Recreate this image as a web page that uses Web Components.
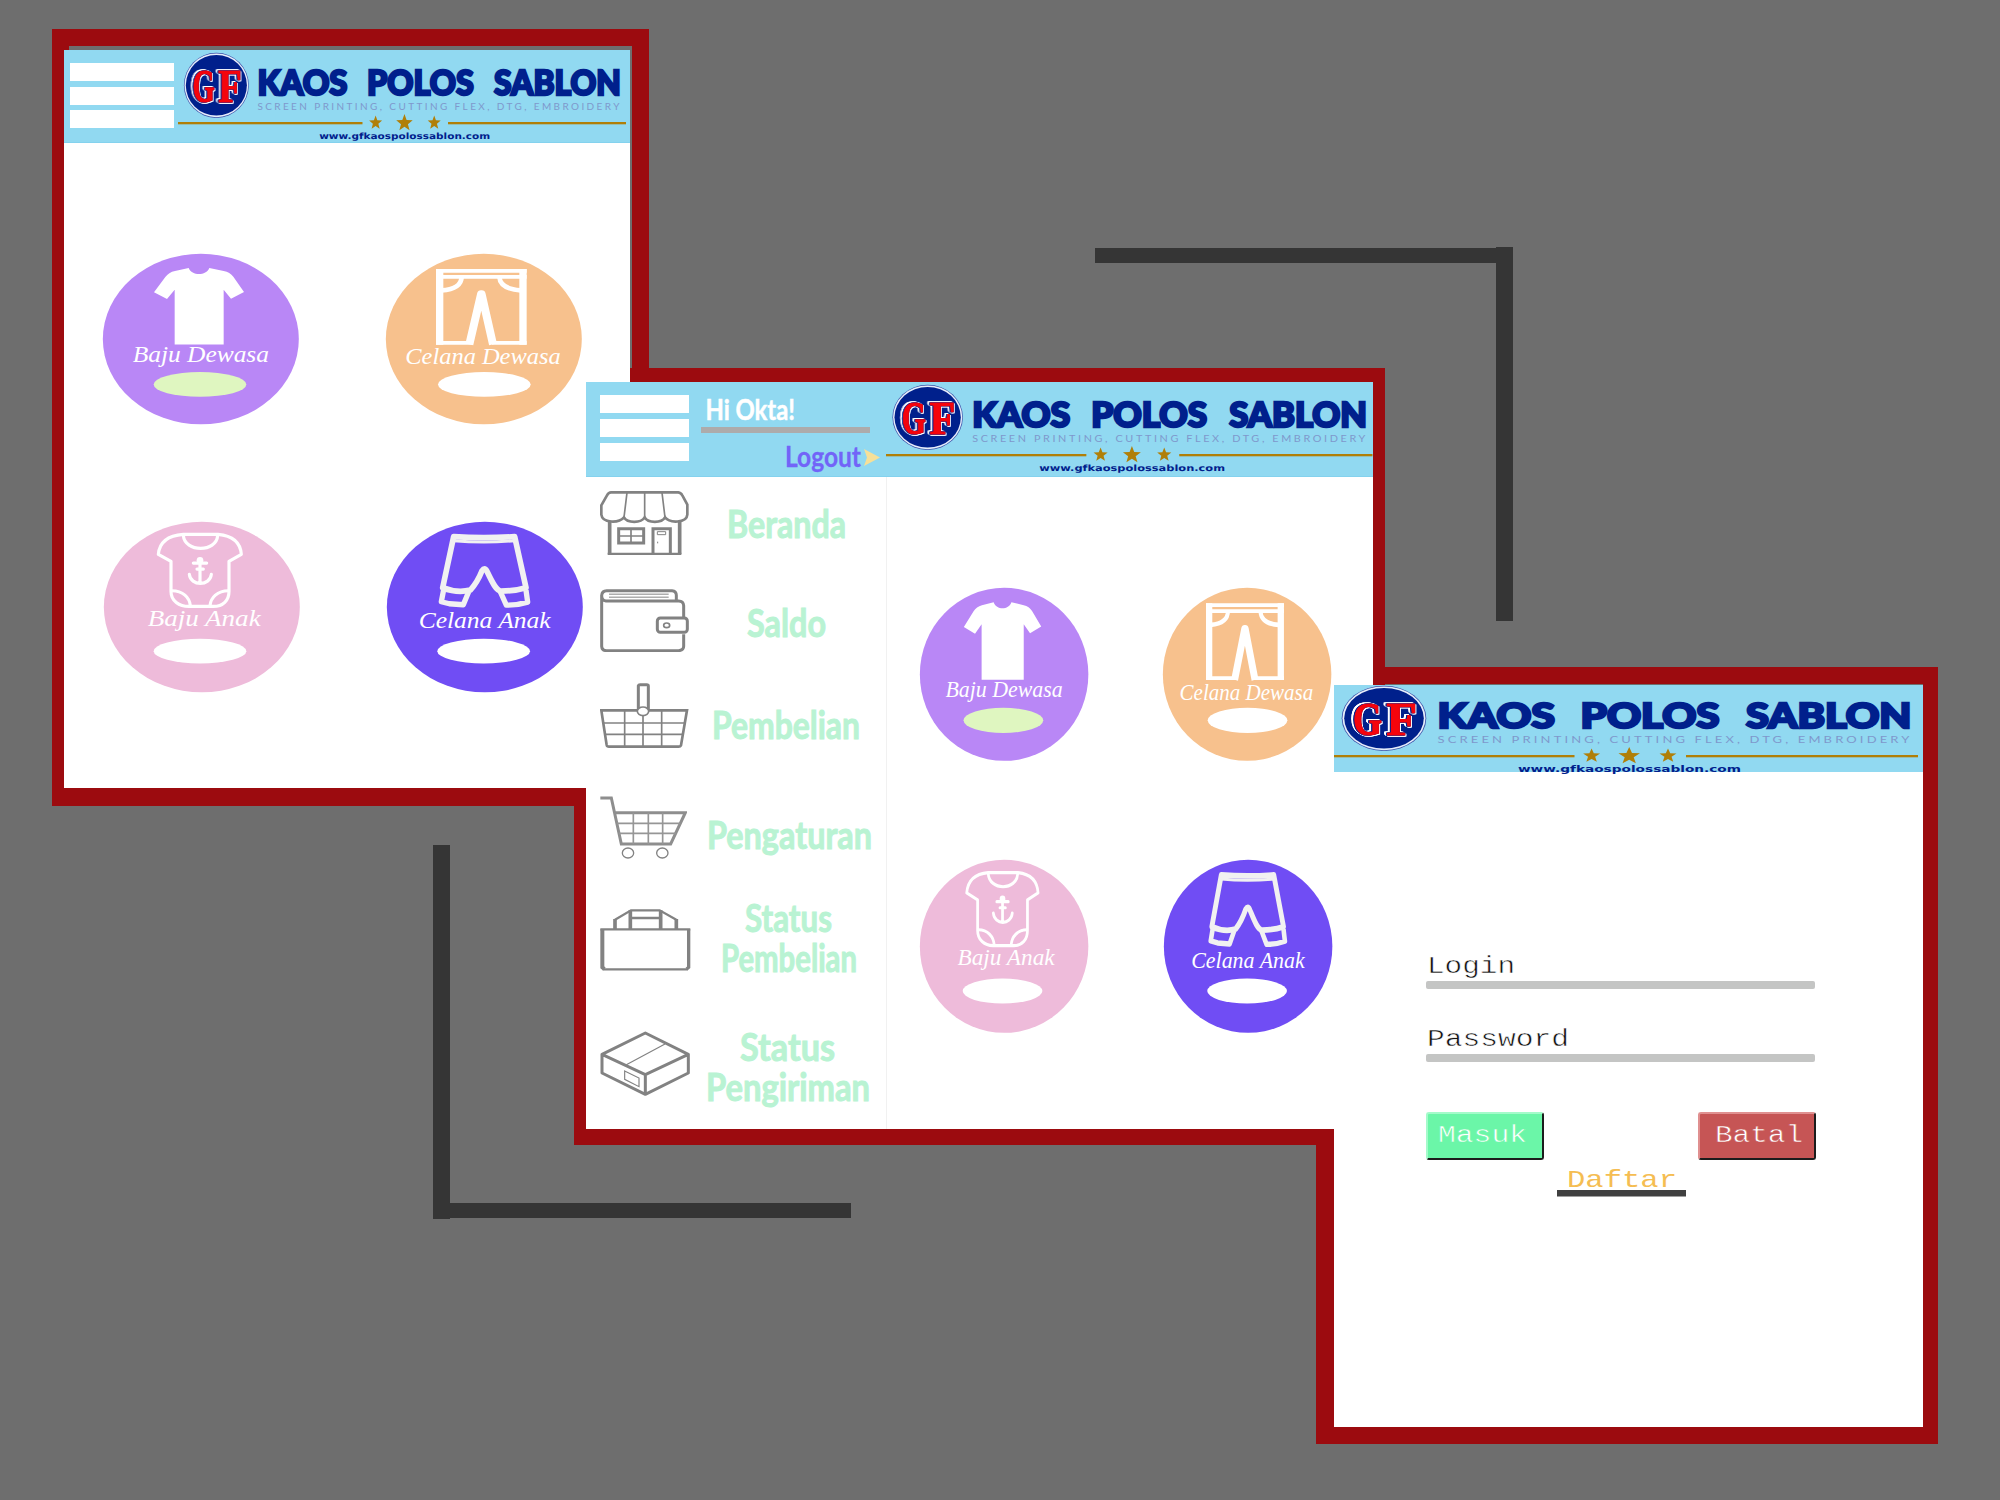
<!DOCTYPE html>
<html lang="id">
<head>
<meta charset="utf-8">
<title>GF Kaos Polos Sablon</title>
<style>
html,body{margin:0;height:100%}
body{background:#6e6e6e;font-family:"Liberation Sans",sans-serif;overflow:hidden}
</style>
</head>
<body>
<shop-board></shop-board>
<script>
const define=(name,render)=>customElements.define(name,class extends HTMLElement{
  constructor(){super();this.attachShadow({mode:'open'});}
  connectedCallback(){this.shadowRoot.innerHTML=render(this);}
});
const star=(cx,cy,rx,ry)=>{
  let p=[];
  for(let i=0;i<10;i++){const a=-Math.PI/2+i*Math.PI/5,k=i%2?.42:1;p.push((cx+rx*k*Math.cos(a)).toFixed(2)+','+(cy+ry*k*Math.sin(a)).toFixed(2));}
  return `<polygon points="${p.join(' ')}"/>`;
};
const fit=(s,x1,x2,y,size,extra='')=>`<text x="${x1}" y="${y}" font-size="${size}" textLength="${x2-x1}" lengthAdjust="spacingAndGlyphs" ${extra}>${s}</text>`;

/* Brand artwork; width is set by the banner that holds it */
define('brand-logo',el=>`<style>
:host{display:block;flex:none;height:92px}
svg{display:block;width:100%;height:92px;overflow:visible}
.name{font-family:Lato,sans-serif;font-weight:900;fill:#00208c;stroke:#00208c;stroke-width:2.4;stroke-linejoin:miter}
.sub{font-family:Lato,sans-serif;font-weight:400;fill:#7f98cc}
.web{font-family:"DejaVu Sans",sans-serif;font-weight:700;fill:#00208c}
.gf{font-family:"Liberation Serif",serif;font-weight:700;fill:#f5040c;stroke:#f5040c;stroke-width:1.2;filter:drop-shadow(.8px 0 0 #00208c) drop-shadow(-.8px 0 0 #00208c) drop-shadow(1px 1px 0 #fff) drop-shadow(-1.2px -1px 0 #fff)}
</style>
<svg viewBox="0 0 584 92" preserveAspectRatio="none">
<ellipse cx="50" cy="33.3" rx="42.3" ry="32.6" fill="#3c50a8"/>
<ellipse cx="50" cy="33.3" rx="41.5" ry="31.9" fill="#e6eefb"/>
<ellipse cx="50" cy="33.3" rx="39.8" ry="30.3" fill="#00208c"/>
<g class="gf">${fit('G',19,48,49.8,46)}${fit('F',52.5,83,50.3,46)}</g>
<g class="name">${fit('KAOS',103.5,221,42.6,33.8)}${fit('POLOS',246.5,385.5,42.6,33.8)}${fit('SABLON',412,577.5,42.6,33.8)}</g>
<text class="sub" x="103.500" y="58.200" font-size="10" textLength="475" lengthAdjust="spacingAndGlyphs" letter-spacing="2.400">SCREEN PRINTING, CUTTING FLEX, DTG, EMBROIDERY</text>
<g fill="#b07f08"><rect x="0" y="70" width="240.500" height="2.300"/><rect x="352" y="70" width="232" height="2.300"/>
${star(257.6,70.8,8.9,7.4)}${star(295.2,71,11.3,9)}${star(334,70.8,8.9,7.4)}</g>
<g class="web">${fit('www.gfkaospolossablon.com',184,407,87,8.6)}</g>
</svg>`);

define('menu-bars',()=>`<style>
:host{display:flex;flex-direction:column;gap:5.3px;flex:none}
i{display:block;height:18.3px;background:#fff}
</style><i></i><i></i><i></i>`);

const art={
baju:`<path fill="#fff" d="M257 42C267 66 309 66 319 42L362 51Q381 55 391 68L423 114 384 134 362 107V271H215V107L192 135 153 115 187 69Q197 55 216 51Z"/>`,
celana:`<g fill="none" stroke="#fff"><path stroke-width="22" d="M161 45V272M411 45V272"/><path stroke-width="11" d="M150 50.500H422M150 68.500H422M150 266.500H260M318 266.500H422"/><path stroke-width="14" d="M227 68Q226 105 166 109M340 68Q342 105 404 109"/><path stroke-width="24" stroke-linejoin="round" d="M250 271 285 121H287L321 271"/></g>`,
bodi:`<g fill="none" stroke="#fff" stroke-width="9.500" stroke-linejoin="round" stroke-linecap="round"><path d="M238 37H342Q408 43 412 97L375 118V208C375 235 357 253 328 253H255C225 253 201 236 201 208V118L163 97Q168 42 238 37Z"/><path d="M238 40C242 92 338 92 341 40M204 206C236 206 257 226 259 251M373 206C341 206 320 226 318 251"/><path d="M288 112V184M268 123H308M279 141H298M256 157C260 193 318 193 322 157"/></g><circle cx="288" cy="115" r="10" fill="#fff"/>`,
pendek:`<g fill="none" stroke="#f1f1f1" stroke-width="17" stroke-linejoin="round"><path d="M200 44 167 197Q211 214 250 204 271 181 285 146Q293 134 299 146C314 177 327 207 342 207Q383 207 417 197L383 44Q290 50 200 44Z"/><path stroke-width="9" d="M200 56Q290 64 384 56"/><path d="M170 203 163 239 187 245 229 248 245 209M340 209 358 249Q390 250 422 240L417 204" stroke-width="16"/></g>`
};
define('product-disc',el=>{
  const g=n=>el.getAttribute(n);const [x1,x2,y]=g('at').split(',').map(Number);
  return `<style>
:host{display:block;flex:none;width:var(--disc-w);height:var(--disc-h)}
svg{display:block;width:100%;height:100%;overflow:visible}
text{font-family:"Liberation Serif",serif;font-style:italic;fill:#fff}
</style><svg viewBox="0 0 588 511" preserveAspectRatio="none"><ellipse cx="293.500" cy="255" rx="294" ry="255.500" fill="${g('color')}"/>${art[g('art')]}${fit(g('label'),x1,x2,y,67)}<ellipse cx="${g('px')||291}" cy="${g('py')||391}" rx="139" ry="37" fill="${g('pill')||'#fff'}"/></svg>`;
});
define('product-grid',()=>`<style>
:host{display:flex;flex-direction:column;gap:var(--row-gap)}
.row{display:flex;gap:var(--col-gap)}.row+.row{margin-left:.8px}
</style>
<div class="row"><product-disc art="baju" color="#b987f6" label="Baju Dewasa" at="89,498,323" pill="#dff6c0"></product-disc>
<product-disc art="celana" color="#f7c18d" label="Celana Dewasa" at="58,524,331" px="295"></product-disc></div>
<div class="row"><product-disc art="bodi" color="#eebbda" label="Baju Anak" at="131,470,311" px="288" py="387"></product-disc>
<product-disc art="pendek" color="#704df4" label="Celana Anak" at="95,491,319" px="290" py="387"></product-disc></div>`);

const icons={
toko:['90 47 267 193',`<path stroke-width="8" d="M123 51H325Q333 52 337 60L352 88V118C350 144 298 144 285 126 275 144 234 144 224 126 213 144 172 144 162 126 146 144 97 144 94 118V90L111 60Q116 51 123 51Z"/><path stroke-width="5" d="M171 52 162 126M224 52V126M276 52 285 126"/><path stroke-width="11" d="M119 136V236M329 136V236"/><path stroke-width="7" d="M113 236H334"/><path stroke-width="9" d="M146 160H221V203H146ZM249 234V160H301V234"/><path stroke-width="5" d="M183 160V203M146 182H221"/><path stroke-width="3" d="M262 169H287V178H262ZM263 199V204"/>`],
dompet:['90 340 267 190',`<path stroke-width="9" d="M95 358V512Q96 525 110 525H326Q341 524 341 512V476M341 424V390Q340 376 326 376H108Q95 374 95 360 96 345 110 345H306Q319 346 319 359V374"/><rect x="262" y="427" width="90" height="43" rx="9" stroke-width="9"/><ellipse cx="290" cy="449" rx="9" ry="7" stroke-width="5"/><path stroke-width="3" d="M117 355.500H296M117 364.500H296"/>`],
keranjang:['90 624 267 196',`<path stroke-width="8" d="M94 706H351L333 811Q331 815 326 815H117Q111 815 110 810Z"/><path stroke-width="5" d="M164 706V815M219 720V815M275 706V815M100 744H345M106 778H338"/><path stroke-width="9" d="M205 706V632Q206 629 210 629H230Q235 629 235 633V706"/><ellipse cx="219" cy="709" rx="17" ry="13" stroke-width="5" fill="#fff"/>`],
troli:['92 62 262 190',`<path stroke-width="9" stroke="#8e8e8e" d="M93 68H126L156 206H304L348 112H137"/><path stroke-width="5" stroke="#969696" d="M192 112V206M237 112V206M280 112V206M143 144H333M149 174H320"/><ellipse cx="176" cy="233" rx="17" ry="15" stroke-width="4"/><ellipse cx="279" cy="233" rx="17" ry="15" stroke-width="4"/>`],
tas:['90 402 272 186',`<path stroke-width="7" d="M91 463H361M98 583H354"/><path stroke-width="12" d="M97 463V577L103 582"/><path stroke-width="10" d="M356 463V577L350 582"/><path stroke-width="7" d="M135 434 183 406H269L319 434M182 429H269"/><path stroke-width="11" d="M135 432V463M181 406V463M272 406V463M319 432V463"/>`],
paket:['92 768 270 195',`<path stroke-width="9" stroke-linejoin="round" d="M98 838 228 774 357 838V894L228 958 98 894ZM98 838 228 899 357 838M228 899V958"/><path stroke-width="3.500" d="M171 869 287 807M166 888 209 909V935L166 913Z"/>`]
};
/* A sidebar row: icon on the left, one or two label lines in the remaining width */
define('menu-item',el=>{
  const g=n=>el.getAttribute(n),[vb,body]=icons[g('icon')],b=vb.split(' ');
  const lines=g('lines').split(';').map(l=>{const [s,a,c,y]=l.split(',');return `<tspan x="${a-1}" y="${y}" textLength="${c-a+1}" lengthAdjust="spacingAndGlyphs">${s}</tspan>`;}).join(' ');
  return `<style>
:host{display:flex;height:${g('h')}px;flex:none;padding-left:14px}
.icon{display:block;flex:none;width:${b[2]/3}px;height:${b[3]/3}px;margin-top:${g('top')}px}
.label{flex:none;width:180px;height:100%;margin-left:${107-b[2]/3}px;overflow:visible}
text{font-family:Lato,sans-serif;font-weight:700;font-size:37.5px;fill:#b9f3d3;stroke:#b9f3d3;stroke-width:1}
</style><svg class="icon" viewBox="${vb}" fill="none" stroke="#828282" preserveAspectRatio="none">${body}</svg><svg class="label"><text>${lines}</text></svg>`;
});

define('form-field',el=>`<style>
:host{display:block;height:${el.getAttribute('h')}px}
svg{display:block;width:100%;height:31.500px;overflow:visible}
text{font-family:"Liberation Mono",monospace;fill:#111;stroke:#fff;stroke-width:.5}
i{display:block;width:389px;height:7.500px;border-radius:2px;background:#c4c5c4}
</style><svg>${fit(el.getAttribute('label'),1,+el.getAttribute('end'),23,23)}</svg><i></i>`);
define('form-button',el=>`<style>
:host{display:block;box-sizing:border-box;width:118px;height:48.5px;background:${el.getAttribute('color')};border:2px solid;border-color:${el.getAttribute('light')} #1c1c1c #1c1c1c ${el.getAttribute('light')};border-radius:3px}
svg{display:block;width:100%;height:100%}
text{font-family:"Liberation Mono",monospace;fill:#fff;stroke:${el.getAttribute('color')};stroke-width:.5}
</style><svg>${fit(el.getAttribute('label'),+el.getAttribute('from'),+el.getAttribute('to'),28,23.5)}</svg>`);

define('home-screen',()=>`<style>
:host{display:block;background:#fff}
header{display:flex;height:93px;background:#91d9f1;box-sizing:border-box;padding:13px 0 0 6px;border-bottom:1px solid #84d2ee}
menu-bars{width:104px}
brand-logo{width:448px;margin:-11.500px 0 0 4px}
product-grid{--disc-w:196px;--disc-h:170.500px;--col-gap:87px;--row-gap:97.500px;padding:111px 0 0 39px}
</style><header><menu-bars></menu-bars><brand-logo></brand-logo></header><product-grid></product-grid>`);

define('account-screen',()=>`<style>
:host{display:flex;flex-direction:column;background:#fff;overflow:hidden}
header{display:flex;flex:none;height:95px;background:#91d9f1;box-sizing:border-box;border-bottom:1px solid #84d2ee}
menu-bars{width:89px;margin:13px 0 0 14px;gap:5.6px}
.user{display:block;width:197px;height:95px;flex:none}
.user text{font-family:Lato,sans-serif;font-weight:700}
brand-logo{width:486.500px;margin-top:2px}
.body{display:flex;flex:1}
nav{display:flex;flex-direction:column;width:301px;flex:none;box-sizing:border-box;border-right:1px solid #f1f1f1}
product-grid{--disc-w:168.500px;--disc-h:173px;--col-gap:75px;--row-gap:98.500px;padding:111px 0 0 32.700px}
</style>
<header><menu-bars></menu-bars>
<svg class="user" viewBox="689 382 197 95"><g fill="#fff" stroke="#fff" stroke-width=".5">${fit('Hi Okta!',705.5,795,419.5,29)}</g><rect x="701" y="427" width="169" height="6" fill="#adabab"/><g fill="#7264f8" stroke="#7264f8" stroke-width=".3">${fit('Logout',785,861,466.5,28)}</g><path d="M864 449 880 457.500 864 466 867 457.500Z" fill="#f6e098"/></svg>
<brand-logo></brand-logo></header>
<div class="body"><nav>
<menu-item icon="toko" h="93" top="13.600" lines="Beranda,21,139,60.500"></menu-item>
<menu-item icon="dompet" h="97" top="18.500" lines="Saldo,41,119,66.500"></menu-item>
<menu-item icon="keranjang" h="103" top="16" lines="Pembelian,6,153,71.500"></menu-item>
<menu-item icon="troli" h="115" top="25.700" lines="Pengaturan,1,165,78.500"></menu-item>
<menu-item icon="tas" h="115" top="24" lines="Status,39,125,47;Pembelian,15,150,87"></menu-item>
<menu-item icon="paket" h="129" top="31" lines="Status,34,128,60.500;Pengiriman,0,163,100.800"></menu-item>
</nav><product-grid></product-grid></div>`);

define('login-screen',()=>`<style>
:host{display:block;background:#fff}
header{height:87px;background:#91d9f1}
brand-logo{width:584px}
form{display:flex;flex-direction:column;margin:177.500px 0 0 92px;width:390px}
.actions{display:flex;justify-content:space-between;margin-top:17px}
.signup{display:block;width:129px;height:36px;margin-left:131px;overflow:visible}
.signup text{font-family:"Liberation Mono",monospace;fill:#f5bd52}
</style><header><brand-logo></brand-logo></header>
<form><form-field label="Login" end="89" h="73"></form-field><form-field label="Password" end="143" h="72"></form-field>
<div class="actions"><form-button label="Masuk" from="10" to="99" color="#6bf6a8" light="#a4fbca"></form-button><form-button label="Batal" from="15" to="103" color="#c65555" light="#e09090"></form-button></div>
<svg class="signup">${fit('Daftar',10,120,26.800,24)}<rect y="30" width="129" height="6.500" fill="#404040"/></svg></form>`);

define('screen-frame',el=>`<style>:host{display:block;box-sizing:border-box;border-style:solid;border-color:#9c0b0f}</style>`);

define('shop-board',()=>`<style>
:host{display:block;position:relative;width:2000px;height:1500px;background:#6e6e6e;overflow:hidden}
screen-frame,home-screen,account-screen,login-screen,.bar{position:absolute}
.bar{background:#353535}
.f1{left:52px;top:29px;width:597px;height:777px;border-width:17px 17px 18px 17px}
.f2{left:574px;top:368px;width:811px;height:777px;border-width:14px 12px 16px 12px}
.f3{left:1316px;top:667px;width:622px;height:777px;border-width:17px 15px 17px 18px}
home-screen{left:64px;top:50px;width:566px;height:738px}
account-screen{left:586px;top:382px;width:787px;height:747px}
login-screen{left:1334px;top:685px;width:589px;height:742px}
</style>
<div class="bar" style="left:1095px;top:248px;width:401px;height:15px"></div>
<div class="bar" style="left:1496px;top:247px;width:17px;height:374px"></div>
<div class="bar" style="left:433px;top:845px;width:17px;height:374px"></div>
<div class="bar" style="left:450px;top:1203px;width:401px;height:15px"></div>
<screen-frame class="f1"></screen-frame><screen-frame class="f2"></screen-frame><screen-frame class="f3"></screen-frame>
<home-screen></home-screen><account-screen></account-screen><login-screen></login-screen>`);
</script>
</body>
</html>
